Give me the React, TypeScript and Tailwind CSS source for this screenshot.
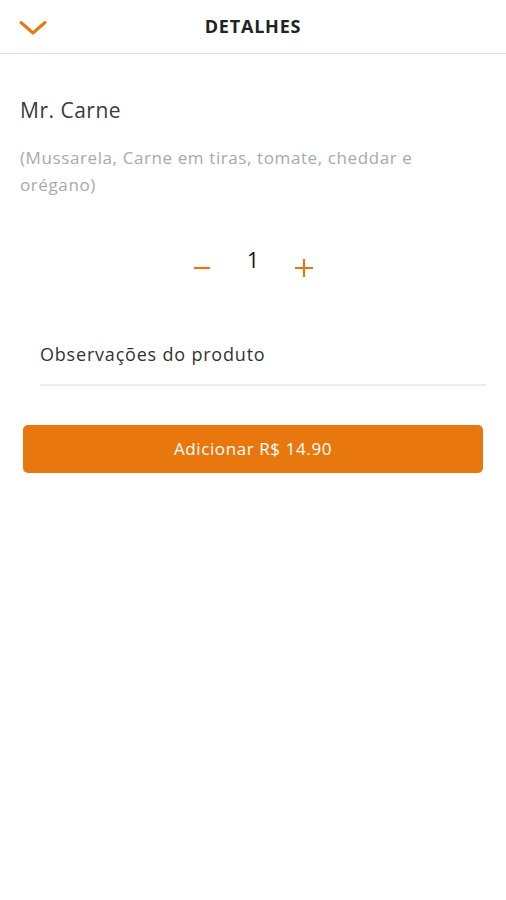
export default function App() {
  return (
    <div className="min-h-[900px] bg-white font-['Open_Sans','Noto_Sans',sans-serif]">
      <header className="relative flex h-[54px] items-center justify-center border-b border-[#e4e4e4]">
        <button className="absolute left-[19px] top-[20px] text-[#e8780e]">
          <svg width="28" height="16" viewBox="0 0 28 16" fill="none">
            <path d="M2 2.5 L14 13 L26 2.5" stroke="currentColor" strokeWidth="3" strokeLinecap="round" strokeLinejoin="round" />
          </svg>
        </button>
        <h1 className="text-[18px] font-bold tracking-[0.8px] text-[#222]">DETALHES</h1>
      </header>

      <section className="pl-5 pr-[40px] pt-[42px]">
        <h2 className="text-[21px] leading-[28px] tracking-[0.5px] text-[#3a3a3a]">Mr. Carne</h2>
        <p className="mt-[20px] text-[17px] leading-[27px] tracking-[0.6px] text-[#a9a9a9]">
          (Mussarela, Carne em tiras, tomate, cheddar e orégano)
        </p>
      </section>

      <div className="mt-[50px] flex items-start justify-center">
        <button className="mt-[8px] flex h-[24px] w-[24px] items-center justify-center text-[#e8780e]">
          <svg width="18" height="18" viewBox="0 0 18 18">
            <path d="M1 9 H17" stroke="currentColor" strokeWidth="2.2" />
          </svg>
        </button>
        <span className="mx-[33px] text-[21px] leading-[24px] text-[#111]">1</span>
        <button className="mt-[8px] flex h-[24px] w-[24px] items-center justify-center text-[#e8780e]">
          <svg width="20" height="20" viewBox="0 0 20 20">
            <path d="M1 10 H19 M10 1 V19" stroke="currentColor" strokeWidth="2.2" />
          </svg>
        </button>
      </div>

      <div className="ml-10 mr-5 mt-[62px] border-b-2 border-[#ececec] pb-[17px]">
        <span className="text-[18px] leading-[24px] tracking-[0.8px] text-[#333]">Observações do produto</span>
      </div>

      <div className="px-[23px] pt-[39px]">
        <button className="flex h-[48px] w-full items-center justify-center rounded-[5px] bg-[#e8780e] text-[17px] tracking-[0.6px] text-white">
          Adicionar R$ 14.90
        </button>
      </div>
    </div>
  );
}
